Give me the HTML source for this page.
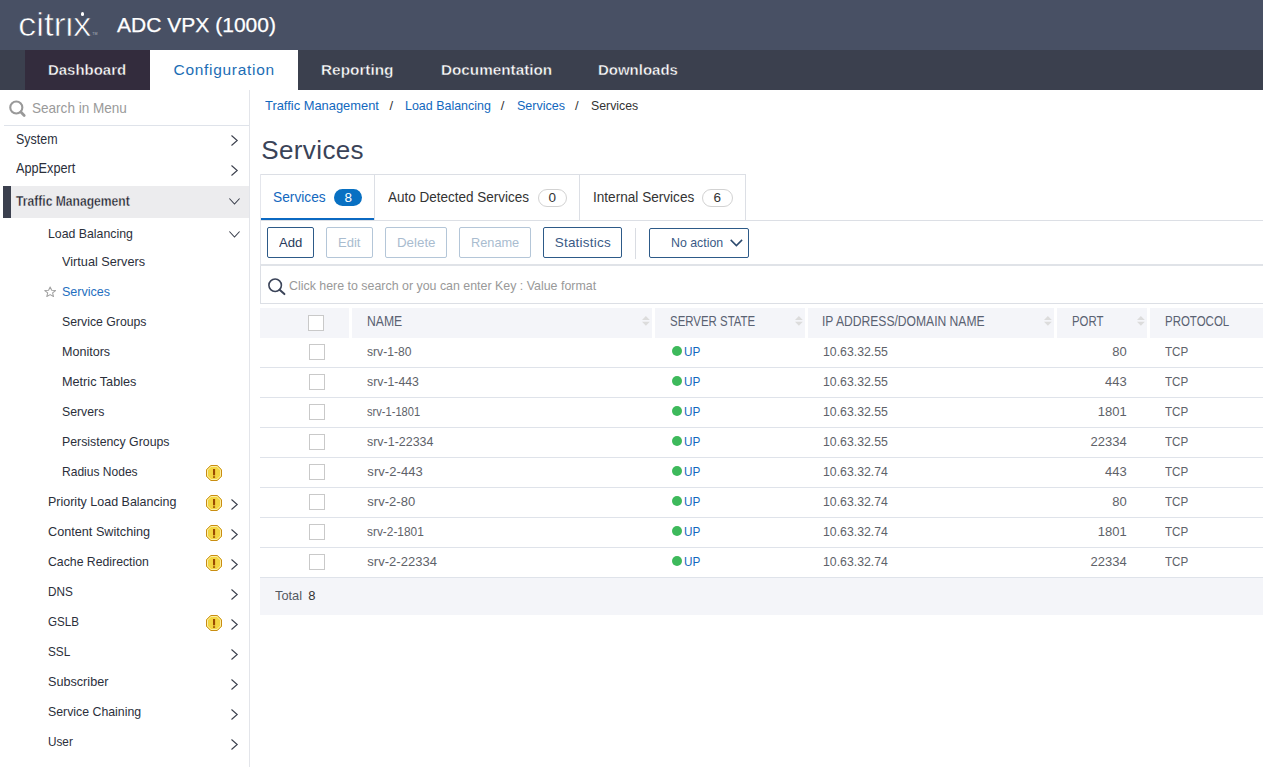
<!DOCTYPE html>
<html lang="en">
<head>
<meta charset="utf-8">
<title>Citrix ADC VPX - Services</title>
<style>
html,body{margin:0;padding:0;}
body{width:1263px;height:767px;overflow:hidden;background:#fff;position:relative;font-family:"Liberation Sans",sans-serif;}
.b{position:absolute;box-sizing:border-box;}
.t{position:absolute;white-space:pre;font-family:"Liberation Sans",sans-serif;}
svg{position:absolute;overflow:visible;}
.cb{position:absolute;box-sizing:border-box;width:16px;height:16px;border:1px solid #c9c9c9;background:#fff;left:309px;}
.th{position:absolute;box-sizing:border-box;top:308px;height:30px;background:#f4f5f9;}
.rl{position:absolute;left:260px;width:1003px;height:1px;background:#dfe3ea;}
.dot{position:absolute;width:10px;height:10px;border-radius:50%;background:#3db95b;left:671.8px;}
.btn{position:absolute;box-sizing:border-box;top:227px;height:31px;border:1px solid #2d5a88;border-radius:2px;background:#fff;}
.btn.dis{border-color:#b4c6d8;}
.logo{-webkit-text-stroke:0.7px #485064;}
.ttl{-webkit-text-stroke:0.25px #fff;}
.nv{-webkit-text-stroke:0.4px #3b404e;}
.nvd{-webkit-text-stroke:0.4px #332c3d;}
.tm{-webkit-text-stroke:0.35px #ececee;}
.pill{position:absolute;box-sizing:border-box;height:18px;border-radius:9px;}
</style>
</head>
<body>
<!-- header -->
<div class="b" style="left:0;top:0;width:1263px;height:50px;background:#485064;"></div>
<div class="b" style="left:0;top:50px;width:1263px;height:40px;background:#3b404e;"></div>
<div class="b" style="left:25px;top:50px;width:125px;height:40px;background:#332c3d;"></div>
<div class="b" style="left:150px;top:50px;width:148px;height:40px;background:#fff;"></div>

<!-- sidebar -->
<div class="b" style="left:249px;top:90px;width:1px;height:677px;background:#e3e5ea;"></div>
<div class="b" style="left:4px;top:125px;width:245px;height:1px;background:#dfe3ea;"></div>
<div class="b" style="left:3px;top:186px;width:246px;height:32px;background:#ececee;"></div>
<div class="b" style="left:3px;top:186px;width:8px;height:32px;background:#3b404e;"></div>
<svg style="left:7.6px;top:98.6px" width="20" height="20" viewBox="0 0 20 20"><circle cx="8.3" cy="8.5" r="6.05" fill="none" stroke="#999" stroke-width="2.1"/><path d="M12.9 13.1 L16.2 16.4" stroke="#999" stroke-width="2.8" stroke-linecap="round"/></svg>
<svg style="left:231.4px;top:135.3px" width="7" height="11" viewBox="0 0 7 11"><path d="M0.5 0.5 L6.2 5.5 L0.5 10.5" fill="none" stroke="#3a3f4c" stroke-width="1.1"/></svg>
<svg style="left:231.4px;top:165.3px" width="7" height="11" viewBox="0 0 7 11"><path d="M0.5 0.5 L6.2 5.5 L0.5 10.5" fill="none" stroke="#3a3f4c" stroke-width="1.1"/></svg>
<svg style="left:231.4px;top:499.0px" width="7" height="11" viewBox="0 0 7 11"><path d="M0.5 0.5 L6.2 5.5 L0.5 10.5" fill="none" stroke="#3a3f4c" stroke-width="1.1"/></svg>
<svg style="left:231.4px;top:529.0px" width="7" height="11" viewBox="0 0 7 11"><path d="M0.5 0.5 L6.2 5.5 L0.5 10.5" fill="none" stroke="#3a3f4c" stroke-width="1.1"/></svg>
<svg style="left:231.4px;top:559.0px" width="7" height="11" viewBox="0 0 7 11"><path d="M0.5 0.5 L6.2 5.5 L0.5 10.5" fill="none" stroke="#3a3f4c" stroke-width="1.1"/></svg>
<svg style="left:231.4px;top:589.0px" width="7" height="11" viewBox="0 0 7 11"><path d="M0.5 0.5 L6.2 5.5 L0.5 10.5" fill="none" stroke="#3a3f4c" stroke-width="1.1"/></svg>
<svg style="left:231.4px;top:619.0px" width="7" height="11" viewBox="0 0 7 11"><path d="M0.5 0.5 L6.2 5.5 L0.5 10.5" fill="none" stroke="#3a3f4c" stroke-width="1.1"/></svg>
<svg style="left:231.4px;top:649.0px" width="7" height="11" viewBox="0 0 7 11"><path d="M0.5 0.5 L6.2 5.5 L0.5 10.5" fill="none" stroke="#3a3f4c" stroke-width="1.1"/></svg>
<svg style="left:231.4px;top:679.0px" width="7" height="11" viewBox="0 0 7 11"><path d="M0.5 0.5 L6.2 5.5 L0.5 10.5" fill="none" stroke="#3a3f4c" stroke-width="1.1"/></svg>
<svg style="left:231.4px;top:709.0px" width="7" height="11" viewBox="0 0 7 11"><path d="M0.5 0.5 L6.2 5.5 L0.5 10.5" fill="none" stroke="#3a3f4c" stroke-width="1.1"/></svg>
<svg style="left:231.4px;top:739.0px" width="7" height="11" viewBox="0 0 7 11"><path d="M0.5 0.5 L6.2 5.5 L0.5 10.5" fill="none" stroke="#3a3f4c" stroke-width="1.1"/></svg>
<svg style="left:229.1px;top:198.29999999999998px" width="11" height="7" viewBox="0 0 11 7"><path d="M0.4 0.5 L5.5 6 L10.6 0.5" fill="none" stroke="#3a3f4c" stroke-width="1.1"/></svg>
<svg style="left:229.2px;top:231.39999999999998px" width="11" height="7" viewBox="0 0 11 7"><path d="M0.4 0.5 L5.5 6 L10.6 0.5" fill="none" stroke="#3a3f4c" stroke-width="1.1"/></svg>
<svg style="left:206px;top:465px" width="16" height="16" viewBox="0 0 16 16"><path d="M4.7 0.5 H11.3 L15.5 4.7 V11.3 L11.3 15.5 H4.7 L0.5 11.3 V4.7 Z" fill="#f3d542" stroke="#c98d12" stroke-width="1"/><path d="M5.1 1.5 H10.9 L14.5 5.1 V10.9 L10.9 14.5 H5.1 L1.5 10.9 V5.1 Z" fill="none" stroke="#fbeea6" stroke-width="1"/><rect x="7" y="4" width="2.1" height="6.3" fill="#9a4b00"/><rect x="7" y="11.3" width="2.1" height="1.5" fill="#9a4b00"/></svg>
<svg style="left:206px;top:495px" width="16" height="16" viewBox="0 0 16 16"><path d="M4.7 0.5 H11.3 L15.5 4.7 V11.3 L11.3 15.5 H4.7 L0.5 11.3 V4.7 Z" fill="#f3d542" stroke="#c98d12" stroke-width="1"/><path d="M5.1 1.5 H10.9 L14.5 5.1 V10.9 L10.9 14.5 H5.1 L1.5 10.9 V5.1 Z" fill="none" stroke="#fbeea6" stroke-width="1"/><rect x="7" y="4" width="2.1" height="6.3" fill="#9a4b00"/><rect x="7" y="11.3" width="2.1" height="1.5" fill="#9a4b00"/></svg>
<svg style="left:206px;top:525px" width="16" height="16" viewBox="0 0 16 16"><path d="M4.7 0.5 H11.3 L15.5 4.7 V11.3 L11.3 15.5 H4.7 L0.5 11.3 V4.7 Z" fill="#f3d542" stroke="#c98d12" stroke-width="1"/><path d="M5.1 1.5 H10.9 L14.5 5.1 V10.9 L10.9 14.5 H5.1 L1.5 10.9 V5.1 Z" fill="none" stroke="#fbeea6" stroke-width="1"/><rect x="7" y="4" width="2.1" height="6.3" fill="#9a4b00"/><rect x="7" y="11.3" width="2.1" height="1.5" fill="#9a4b00"/></svg>
<svg style="left:206px;top:555px" width="16" height="16" viewBox="0 0 16 16"><path d="M4.7 0.5 H11.3 L15.5 4.7 V11.3 L11.3 15.5 H4.7 L0.5 11.3 V4.7 Z" fill="#f3d542" stroke="#c98d12" stroke-width="1"/><path d="M5.1 1.5 H10.9 L14.5 5.1 V10.9 L10.9 14.5 H5.1 L1.5 10.9 V5.1 Z" fill="none" stroke="#fbeea6" stroke-width="1"/><rect x="7" y="4" width="2.1" height="6.3" fill="#9a4b00"/><rect x="7" y="11.3" width="2.1" height="1.5" fill="#9a4b00"/></svg>
<svg style="left:206px;top:615px" width="16" height="16" viewBox="0 0 16 16"><path d="M4.7 0.5 H11.3 L15.5 4.7 V11.3 L11.3 15.5 H4.7 L0.5 11.3 V4.7 Z" fill="#f3d542" stroke="#c98d12" stroke-width="1"/><path d="M5.1 1.5 H10.9 L14.5 5.1 V10.9 L10.9 14.5 H5.1 L1.5 10.9 V5.1 Z" fill="none" stroke="#fbeea6" stroke-width="1"/><rect x="7" y="4" width="2.1" height="6.3" fill="#9a4b00"/><rect x="7" y="11.3" width="2.1" height="1.5" fill="#9a4b00"/></svg>
<svg style="left:44px;top:286.2px" width="12.3" height="11.8" viewBox="0 0 11 11" preserveAspectRatio="none"><path d="M5.5 0.9 L6.9 4 L10.3 4.3 L7.7 6.5 L8.5 9.8 L5.5 8 L2.5 9.8 L3.3 6.5 L0.7 4.3 L4.1 4 Z" fill="#fff" stroke="#a2a2a2" stroke-width="0.95" stroke-linejoin="round"/></svg>

<!-- tabs -->
<div class="b" style="left:260px;top:174px;width:486px;height:46px;border:1px solid #dcdfe5;border-bottom:none;"></div>
<div class="b" style="left:374px;top:174px;width:1px;height:46px;background:#dcdfe5;"></div>
<div class="b" style="left:579px;top:174px;width:1px;height:46px;background:#dcdfe5;"></div>
<div class="b" style="left:260px;top:219.5px;width:1003px;height:1px;background:#dcdfe5;"></div>
<div class="b" style="left:261px;top:218px;width:113px;height:2px;background:#0b69c2;"></div>
<div class="pill" style="left:334.3px;top:189px;width:28px;height:17px;background:#0870c2;"></div>
<div class="pill" style="left:538px;top:188.5px;width:29px;border:1px solid #d2d2d2;background:#fff;"></div>
<div class="pill" style="left:702px;top:188.5px;width:30.5px;border:1px solid #d2d2d2;background:#fff;"></div>

<div class="b" style="left:260px;top:174px;width:1px;height:130px;background:#e4e6ec;"></div>
<!-- toolbar -->
<div class="btn" style="left:267px;width:47px;"></div>
<div class="btn dis" style="left:326px;width:47px;"></div>
<div class="btn dis" style="left:385px;width:62px;"></div>
<div class="btn dis" style="left:459px;width:72px;"></div>
<div class="btn" style="left:543px;width:79px;"></div>
<div class="b" style="left:635px;top:228px;width:1px;height:31px;background:#d9dce2;"></div>
<div class="btn" style="left:649px;width:100px;top:228px;height:30px;"></div>
<svg style="left:730px;top:239px" width="13" height="8" viewBox="0 0 13 8"><path d="M0.7 0.9 L6.4 6.6 L12.1 0.9" fill="none" stroke="#2c4a6e" stroke-width="1.5"/></svg>
<div class="b" style="left:260px;top:264px;width:1003px;height:2px;background:#e0e3e8;"></div>

<!-- search -->
<div class="b" style="left:260px;top:266px;width:1010px;height:38px;border:1px solid #dcdfe5;border-top:none;"></div>
<svg style="left:266.8px;top:276.8px" width="20" height="20" viewBox="0 0 20 20"><circle cx="8.15" cy="8.25" r="6.25" fill="none" stroke="#3b4459" stroke-width="1.6"/><path d="M12.6 12.7 L17.4 17.1" stroke="#3b4459" stroke-width="2" stroke-linecap="round"/></svg>

<!-- table header -->
<div class="th" style="left:260px;width:89px;"></div>
<div class="th" style="left:352px;width:300px;"></div>
<div class="th" style="left:655px;width:150px;"></div>
<div class="th" style="left:808px;width:246px;"></div>
<div class="th" style="left:1057px;width:90px;"></div>
<div class="th" style="left:1150px;width:113px;"></div>
<div class="cb" style="left:308px;top:315px;"></div>
<svg style="left:641.7px;top:316.1px" width="7.8" height="9.8" viewBox="0 0 7.2 10" preserveAspectRatio="none"><path d="M0 4.2 L3.6 0 L7.2 4.2 Z M0 5.8 L3.6 10 L7.2 5.8 Z" fill="#dcdcdc"/></svg>
<svg style="left:794.7px;top:316.1px" width="7.8" height="9.8" viewBox="0 0 7.2 10" preserveAspectRatio="none"><path d="M0 4.2 L3.6 0 L7.2 4.2 Z M0 5.8 L3.6 10 L7.2 5.8 Z" fill="#dcdcdc"/></svg>
<svg style="left:1043.7px;top:316.1px" width="7.8" height="9.8" viewBox="0 0 7.2 10" preserveAspectRatio="none"><path d="M0 4.2 L3.6 0 L7.2 4.2 Z M0 5.8 L3.6 10 L7.2 5.8 Z" fill="#dcdcdc"/></svg>
<svg style="left:1136.8px;top:316.1px" width="7.8" height="9.8" viewBox="0 0 7.2 10" preserveAspectRatio="none"><path d="M0 4.2 L3.6 0 L7.2 4.2 Z M0 5.8 L3.6 10 L7.2 5.8 Z" fill="#dcdcdc"/></svg>
<div class="cb" style="top:344px"></div><div class="dot" style="top:346.2px"></div>
<div class="rl" style="top:367px"></div>
<div class="cb" style="top:374px"></div><div class="dot" style="top:376.2px"></div>
<div class="rl" style="top:397px"></div>
<div class="cb" style="top:404px"></div><div class="dot" style="top:406.2px"></div>
<div class="rl" style="top:427px"></div>
<div class="cb" style="top:434px"></div><div class="dot" style="top:436.2px"></div>
<div class="rl" style="top:457px"></div>
<div class="cb" style="top:464px"></div><div class="dot" style="top:466.2px"></div>
<div class="rl" style="top:487px"></div>
<div class="cb" style="top:494px"></div><div class="dot" style="top:496.2px"></div>
<div class="rl" style="top:517px"></div>
<div class="cb" style="top:524px"></div><div class="dot" style="top:526.2px"></div>
<div class="rl" style="top:547px"></div>
<div class="cb" style="top:554px"></div><div class="dot" style="top:556.2px"></div>
<div class="rl" style="top:577px"></div>
<div class="b" style="left:260px;top:578px;width:1003px;height:37px;background:#f4f5f9;"></div>

<span class="t logo" style="top:-0.68px;font-size:34px;line-height:51px;color:#fff;letter-spacing:-0.37px;left:18.1px;transform:scaleX(1.08);transform-origin:left center;">citrix</span>
<span class="t ttl" style="top:8.52px;font-size:21px;line-height:32px;color:#fff;letter-spacing:0.02px;left:117px;">ADC VPX (1000)</span>
<span class="t nvd" style="top:57.83px;font-size:15.5px;line-height:23px;color:#fff;font-weight:700;left:48.1px;transform:scaleX(0.9646);transform-origin:left center;">Dashboard</span>
<span class="t" style="top:57.83px;font-size:15.5px;line-height:23px;color:#1c6db5;letter-spacing:0.7px;left:173.5px;">Configuration</span>
<span class="t nv" style="top:57.83px;font-size:15.5px;line-height:23px;color:#fff;font-weight:700;left:321.2px;transform:scaleX(0.9906);transform-origin:left center;">Reporting</span>
<span class="t nv" style="top:57.83px;font-size:15.5px;line-height:23px;color:#fff;font-weight:700;left:440.6px;transform:scaleX(0.9857);transform-origin:left center;">Documentation</span>
<span class="t nv" style="top:57.83px;font-size:15.5px;line-height:23px;color:#fff;font-weight:700;left:598.3px;transform:scaleX(0.9665);transform-origin:left center;">Downloads</span>
<span class="t" style="top:97.18px;font-size:14.5px;line-height:22px;color:#9a9a9a;left:32.4px;transform:scaleX(0.9344);transform-origin:left center;">Search in Menu</span>
<span class="t" style="top:127.58px;font-size:14.5px;line-height:22px;color:#2b2f3b;left:16.3px;transform:scaleX(0.8584);transform-origin:left center;">System</span>
<span class="t" style="top:157.48px;font-size:14.5px;line-height:22px;color:#2b2f3b;left:16.3px;transform:scaleX(0.8757);transform-origin:left center;">AppExpert</span>
<span class="t tm" style="top:189.58px;font-size:14.5px;line-height:22px;color:#1d212b;font-weight:700;left:16.3px;transform:scaleX(0.8357);transform-origin:left center;">Traffic Management</span>
<span class="t" style="top:223.8px;font-size:13px;line-height:20px;color:#2b2f3b;left:48.4px;transform:scaleX(0.9471);transform-origin:left center;">Load Balancing</span>
<span class="t" style="top:252.0px;font-size:13px;line-height:20px;color:#2b2f3b;left:62.2px;transform:scaleX(0.9775);transform-origin:left center;">Virtual Servers</span>
<span class="t" style="top:282.0px;font-size:13px;line-height:20px;color:#1f6fc0;left:62.2px;transform:scaleX(0.9647);transform-origin:left center;">Services</span>
<span class="t" style="top:312.0px;font-size:13px;line-height:20px;color:#2b2f3b;left:62.2px;transform:scaleX(0.9431);transform-origin:left center;">Service Groups</span>
<span class="t" style="top:342.0px;font-size:13px;line-height:20px;color:#2b2f3b;left:62.2px;transform:scaleX(0.9647);transform-origin:left center;">Monitors</span>
<span class="t" style="top:372.0px;font-size:13px;line-height:20px;color:#2b2f3b;left:62.2px;transform:scaleX(0.9745);transform-origin:left center;">Metric Tables</span>
<span class="t" style="top:402.0px;font-size:13px;line-height:20px;color:#2b2f3b;left:62.2px;transform:scaleX(0.9443);transform-origin:left center;">Servers</span>
<span class="t" style="top:432.0px;font-size:13px;line-height:20px;color:#2b2f3b;left:62.2px;transform:scaleX(0.9477);transform-origin:left center;">Persistency Groups</span>
<span class="t" style="top:462.0px;font-size:13px;line-height:20px;color:#2b2f3b;left:62.2px;transform:scaleX(0.9258);transform-origin:left center;">Radius Nodes</span>
<span class="t" style="top:492.0px;font-size:13px;line-height:20px;color:#2b2f3b;left:48.4px;transform:scaleX(0.9603);transform-origin:left center;">Priority Load Balancing</span>
<span class="t" style="top:522.0px;font-size:13px;line-height:20px;color:#2b2f3b;left:48.4px;transform:scaleX(0.9744);transform-origin:left center;">Content Switching</span>
<span class="t" style="top:552.0px;font-size:13px;line-height:20px;color:#2b2f3b;left:48.4px;transform:scaleX(0.9434);transform-origin:left center;">Cache Redirection</span>
<span class="t" style="top:582.0px;font-size:13px;line-height:20px;color:#2b2f3b;left:48.4px;transform:scaleX(0.9034);transform-origin:left center;">DNS</span>
<span class="t" style="top:612.0px;font-size:13px;line-height:20px;color:#2b2f3b;left:48.4px;transform:scaleX(0.8937);transform-origin:left center;">GSLB</span>
<span class="t" style="top:642.0px;font-size:13px;line-height:20px;color:#2b2f3b;left:48.4px;transform:scaleX(0.9073);transform-origin:left center;">SSL</span>
<span class="t" style="top:672.0px;font-size:13px;line-height:20px;color:#2b2f3b;left:48.4px;transform:scaleX(0.972);transform-origin:left center;">Subscriber</span>
<span class="t" style="top:702.0px;font-size:13px;line-height:20px;color:#2b2f3b;left:48.4px;transform:scaleX(0.9473);transform-origin:left center;">Service Chaining</span>
<span class="t" style="top:732.0px;font-size:13px;line-height:20px;color:#2b2f3b;left:48.4px;transform:scaleX(0.9034);transform-origin:left center;">User</span>
<span class="t" style="top:95.9px;font-size:13px;line-height:20px;color:#1268be;left:265.3px;transform:scaleX(0.9914);transform-origin:left center;">Traffic Management</span>
<span class="t" style="top:95.9px;font-size:13px;line-height:20px;color:#333;left:389.6px;">/</span>
<span class="t" style="top:95.9px;font-size:13px;line-height:20px;color:#1268be;left:405.1px;transform:scaleX(0.9583);transform-origin:left center;">Load Balancing</span>
<span class="t" style="top:95.9px;font-size:13px;line-height:20px;color:#333;left:500.8px;">/</span>
<span class="t" style="top:95.9px;font-size:13px;line-height:20px;color:#1268be;left:516.9px;transform:scaleX(0.9647);transform-origin:left center;">Services</span>
<span class="t" style="top:95.9px;font-size:13px;line-height:20px;color:#333;left:574.9px;">/</span>
<span class="t" style="top:95.9px;font-size:13px;line-height:20px;color:#333;left:590.7px;transform:scaleX(0.9467);transform-origin:left center;">Services</span>
<span class="t" style="top:130.99px;font-size:26px;line-height:39px;color:#3a4358;letter-spacing:0.37px;left:261.3px;">Services</span>
<span class="t" style="top:187.05px;font-size:14px;line-height:21px;color:#1268be;left:273.2px;transform:scaleX(0.9816);transform-origin:left center;">Services</span>
<span class="t" style="top:187.72px;font-size:13.5px;line-height:20px;color:#fff;left:344.6px;">8</span>
<span class="t" style="top:187.05px;font-size:14px;line-height:21px;color:#333;left:388px;transform:scaleX(0.9645);transform-origin:left center;">Auto Detected Services</span>
<span class="t" style="top:187.72px;font-size:13.5px;line-height:20px;color:#333;left:548.5px;">0</span>
<span class="t" style="top:187.05px;font-size:14px;line-height:21px;color:#333;left:593px;transform:scaleX(0.9714);transform-origin:left center;">Internal Services</span>
<span class="t" style="top:187.72px;font-size:13.5px;line-height:20px;color:#333;left:713.5px;">6</span>
<span class="t" style="top:232.52px;font-size:13.5px;line-height:20px;color:#2a3a5c;left:279px;transform:scaleX(0.9737);transform-origin:left center;">Add</span>
<span class="t" style="top:232.52px;font-size:13.5px;line-height:20px;color:#a9bccf;left:338.1px;transform:scaleX(0.9671);transform-origin:left center;">Edit</span>
<span class="t" style="top:232.52px;font-size:13.5px;line-height:20px;color:#a9bccf;left:396.9px;transform:scaleX(0.9864);transform-origin:left center;">Delete</span>
<span class="t" style="top:232.52px;font-size:13.5px;line-height:20px;color:#a9bccf;left:471.1px;transform:scaleX(0.9445);transform-origin:left center;">Rename</span>
<span class="t" style="top:232.52px;font-size:13.5px;line-height:20px;color:#3a5a86;letter-spacing:0.22px;left:554.7px;">Statistics</span>
<span class="t" style="top:232.52px;font-size:13.5px;line-height:20px;color:#3a5a86;left:670.5px;transform:scaleX(0.915);transform-origin:left center;">No action</span>
<span class="t" style="top:276.2px;font-size:13px;line-height:20px;color:#999;left:288.5px;transform:scaleX(0.9536);transform-origin:left center;">Click here to search or you can enter Key : Value format</span>
<span class="t" style="top:311.22px;font-size:13.8px;line-height:21px;color:#5a6272;left:367.0px;transform:scaleX(0.8828);transform-origin:left center;">NAME</span>
<span class="t" style="top:311.22px;font-size:13.8px;line-height:21px;color:#5a6272;left:670.1px;transform:scaleX(0.8292);transform-origin:left center;">SERVER STATE</span>
<span class="t" style="top:311.22px;font-size:13.8px;line-height:21px;color:#5a6272;left:822.2px;transform:scaleX(0.8776);transform-origin:left center;">IP ADDRESS/DOMAIN NAME</span>
<span class="t" style="top:311.22px;font-size:13.8px;line-height:21px;color:#5a6272;left:1071.7px;transform:scaleX(0.8246);transform-origin:left center;">PORT</span>
<span class="t" style="top:311.22px;font-size:13.8px;line-height:21px;color:#5a6272;left:1164.6px;transform:scaleX(0.8317);transform-origin:left center;">PROTOCOL</span>
<span class="t" style="top:341.9px;font-size:13px;line-height:20px;color:#5e6269;left:367.3px;transform:scaleX(0.9311);transform-origin:left center;">srv-1-80</span>
<span class="t" style="top:341.69px;font-size:13.6px;line-height:20px;color:#1268be;left:684.0px;transform:scaleX(0.8629);transform-origin:left center;">UP</span>
<span class="t" style="top:341.9px;font-size:13px;line-height:20px;color:#5e6269;left:822.9px;transform:scaleX(0.9449);transform-origin:left center;">10.63.32.55</span>
<span class="t" style="top:341.9px;font-size:13px;line-height:20px;color:#5e6269;right:136.3px;">80</span>
<span class="t" style="top:341.69px;font-size:13.6px;line-height:20px;color:#5e6269;left:1165.0px;transform:scaleX(0.857);transform-origin:left center;">TCP</span>
<span class="t" style="top:371.9px;font-size:13px;line-height:20px;color:#5e6269;left:367.3px;transform:scaleX(0.945);transform-origin:left center;">srv-1-443</span>
<span class="t" style="top:371.69px;font-size:13.6px;line-height:20px;color:#1268be;left:684.0px;transform:scaleX(0.8629);transform-origin:left center;">UP</span>
<span class="t" style="top:371.9px;font-size:13px;line-height:20px;color:#5e6269;left:822.9px;transform:scaleX(0.9449);transform-origin:left center;">10.63.32.55</span>
<span class="t" style="top:371.9px;font-size:13px;line-height:20px;color:#5e6269;right:136.3px;">443</span>
<span class="t" style="top:371.69px;font-size:13.6px;line-height:20px;color:#5e6269;left:1165.0px;transform:scaleX(0.857);transform-origin:left center;">TCP</span>
<span class="t" style="top:401.9px;font-size:13px;line-height:20px;color:#5e6269;left:367.3px;transform:scaleX(0.8545);transform-origin:left center;">srv-1-1801</span>
<span class="t" style="top:401.69px;font-size:13.6px;line-height:20px;color:#1268be;left:684.0px;transform:scaleX(0.8629);transform-origin:left center;">UP</span>
<span class="t" style="top:401.9px;font-size:13px;line-height:20px;color:#5e6269;left:822.9px;transform:scaleX(0.9449);transform-origin:left center;">10.63.32.55</span>
<span class="t" style="top:401.9px;font-size:13px;line-height:20px;color:#5e6269;right:136.3px;">1801</span>
<span class="t" style="top:401.69px;font-size:13.6px;line-height:20px;color:#5e6269;left:1165.0px;transform:scaleX(0.857);transform-origin:left center;">TCP</span>
<span class="t" style="top:431.9px;font-size:13px;line-height:20px;color:#5e6269;left:367.3px;transform:scaleX(0.9571);transform-origin:left center;">srv-1-22334</span>
<span class="t" style="top:431.69px;font-size:13.6px;line-height:20px;color:#1268be;left:684.0px;transform:scaleX(0.8629);transform-origin:left center;">UP</span>
<span class="t" style="top:431.9px;font-size:13px;line-height:20px;color:#5e6269;left:822.9px;transform:scaleX(0.9449);transform-origin:left center;">10.63.32.55</span>
<span class="t" style="top:431.9px;font-size:13px;line-height:20px;color:#5e6269;right:136.3px;">22334</span>
<span class="t" style="top:431.69px;font-size:13.6px;line-height:20px;color:#5e6269;left:1165.0px;transform:scaleX(0.857);transform-origin:left center;">TCP</span>
<span class="t" style="top:461.9px;font-size:13px;line-height:20px;color:#5e6269;letter-spacing:0.08px;left:367.3px;">srv-2-443</span>
<span class="t" style="top:461.69px;font-size:13.6px;line-height:20px;color:#1268be;left:684.0px;transform:scaleX(0.8629);transform-origin:left center;">UP</span>
<span class="t" style="top:461.9px;font-size:13px;line-height:20px;color:#5e6269;left:822.9px;transform:scaleX(0.9449);transform-origin:left center;">10.63.32.74</span>
<span class="t" style="top:461.9px;font-size:13px;line-height:20px;color:#5e6269;right:136.3px;">443</span>
<span class="t" style="top:461.69px;font-size:13.6px;line-height:20px;color:#5e6269;left:1165.0px;transform:scaleX(0.857);transform-origin:left center;">TCP</span>
<span class="t" style="top:491.9px;font-size:13px;line-height:20px;color:#5e6269;letter-spacing:0.03px;left:367.3px;">srv-2-80</span>
<span class="t" style="top:491.69px;font-size:13.6px;line-height:20px;color:#1268be;left:684.0px;transform:scaleX(0.8629);transform-origin:left center;">UP</span>
<span class="t" style="top:491.9px;font-size:13px;line-height:20px;color:#5e6269;left:822.9px;transform:scaleX(0.9449);transform-origin:left center;">10.63.32.74</span>
<span class="t" style="top:491.9px;font-size:13px;line-height:20px;color:#5e6269;right:136.3px;">80</span>
<span class="t" style="top:491.69px;font-size:13.6px;line-height:20px;color:#5e6269;left:1165.0px;transform:scaleX(0.857);transform-origin:left center;">TCP</span>
<span class="t" style="top:521.9px;font-size:13px;line-height:20px;color:#5e6269;left:367.3px;transform:scaleX(0.9141);transform-origin:left center;">srv-2-1801</span>
<span class="t" style="top:521.69px;font-size:13.6px;line-height:20px;color:#1268be;left:684.0px;transform:scaleX(0.8629);transform-origin:left center;">UP</span>
<span class="t" style="top:521.9px;font-size:13px;line-height:20px;color:#5e6269;left:822.9px;transform:scaleX(0.9449);transform-origin:left center;">10.63.32.74</span>
<span class="t" style="top:521.9px;font-size:13px;line-height:20px;color:#5e6269;right:136.3px;">1801</span>
<span class="t" style="top:521.69px;font-size:13.6px;line-height:20px;color:#5e6269;left:1165.0px;transform:scaleX(0.857);transform-origin:left center;">TCP</span>
<span class="t" style="top:551.9px;font-size:13px;line-height:20px;color:#5e6269;letter-spacing:0.03px;left:367.3px;">srv-2-22334</span>
<span class="t" style="top:551.69px;font-size:13.6px;line-height:20px;color:#1268be;left:684.0px;transform:scaleX(0.8629);transform-origin:left center;">UP</span>
<span class="t" style="top:551.9px;font-size:13px;line-height:20px;color:#5e6269;left:822.9px;transform:scaleX(0.9449);transform-origin:left center;">10.63.32.74</span>
<span class="t" style="top:551.9px;font-size:13px;line-height:20px;color:#5e6269;right:136.3px;">22334</span>
<span class="t" style="top:551.69px;font-size:13.6px;line-height:20px;color:#5e6269;left:1165.0px;transform:scaleX(0.857);transform-origin:left center;">TCP</span>
<span class="t" style="top:586.0px;font-size:13px;line-height:20px;color:#555a62;left:275.4px;transform:scaleX(0.9866);transform-origin:left center;">Total</span>
<span class="t" style="top:586.0px;font-size:13px;line-height:20px;color:#333;left:308.2px;">8</span>
<!-- logo dot fix -->
<div class="b" style="left:66px;top:10px;width:7px;height:6.5px;background:#485064;"></div>
<div class="b" style="left:80.7px;top:12.2px;width:3.6px;height:3.6px;border-radius:50%;background:#fff;"></div>
<span class="t" style="left:92.3px;top:31.6px;font-size:3.6px;line-height:5px;color:#aeb3be;">TM</span>
</body>
</html>
